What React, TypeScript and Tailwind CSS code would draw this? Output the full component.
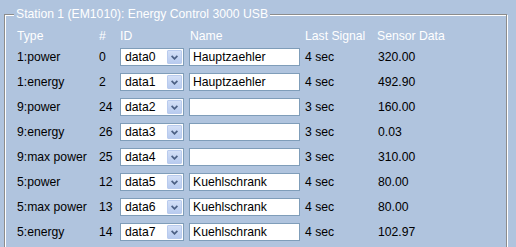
import React from 'react';

interface Row {
  type: string;
  num: number;
  id: string;
  name: string;
  signal: string;
  data: string;
}

const ROWS: Row[] = [
  { type: '1:power', num: 0, id: 'data0', name: 'Hauptzaehler', signal: '4 sec', data: '320.00' },
  { type: '1:energy', num: 2, id: 'data1', name: 'Hauptzaehler', signal: '4 sec', data: '492.90' },
  { type: '9:power', num: 24, id: 'data2', name: '', signal: '3 sec', data: '160.00' },
  { type: '9:energy', num: 26, id: 'data3', name: '', signal: '3 sec', data: '0.03' },
  { type: '9:max power', num: 25, id: 'data4', name: '', signal: '3 sec', data: '310.00' },
  { type: '5:power', num: 12, id: 'data5', name: 'Kuehlschrank', signal: '4 sec', data: '80.00' },
  { type: '5:max power', num: 13, id: 'data6', name: 'Kuehlschrank', signal: '4 sec', data: '80.00' },
  { type: '5:energy', num: 14, id: 'data7', name: 'Kuehlschrank', signal: '4 sec', data: '102.97' },
];

const Combo: React.FC<{ value: string }> = ({ value }) => (
  <div className="flex h-[18px] w-[64px] items-stretch border border-[#7f9db9] bg-white">
    <span className="flex-1 pl-[4px] leading-[16px] text-black">{value}</span>
    <span className="m-[1px] flex w-[15px] items-center justify-center rounded-[1px] border border-[#b9cbee] bg-gradient-to-b from-[#d4e0f7] to-[#b8cbef]">
      <svg width="7" height="5" viewBox="0 0 7 5">
        <path d="M0.6 0.9 L3.5 3.8 L6.4 0.9" fill="none" stroke="#4d6185" strokeWidth="1.8" />
      </svg>
    </span>
  </div>
);

export default function App() {
  return (
    <div
      className="relative h-[247px] w-[516px] overflow-hidden bg-[#b0c4de] text-[12.2px]"
      style={{ fontFamily: '"Liberation Sans", Arial, sans-serif' }}
    >
      <div className="absolute left-[4px] top-[14px] h-[260px] w-[503px] border border-[#8c8c8c] shadow-[inset_1px_1px_0_#ffffff,1px_1px_0_#ffffff]" />
      <span className="absolute left-[14px] top-[7px] bg-[#b0c4de] px-[2px] leading-[15px] text-white">
        Station 1 (EM1010): Energy Control 3000 USB
      </span>

      <div className="grid grid-cols-[82px_21px_69px_116px_72px_1fr] gap-y-[7px] pl-[17px] pt-[31px]">
        <span className="leading-[10px] text-white">Type</span>
        <span className="leading-[10px] text-white">#</span>
        <span className="leading-[10px] text-white">ID</span>
        <span className="pl-[1px] leading-[10px] text-white">Name</span>
        <span className="leading-[10px] text-white">Last Signal</span>
        <span className="leading-[10px] text-white">Sensor Data</span>

        {ROWS.map((r) => (
          <React.Fragment key={r.id}>
            <span className="leading-[18px] text-black">{r.type}</span>
            <span className="leading-[18px] text-black">{r.num}</span>
            <Combo value={r.id} />
            <div className="h-[18px] w-[111px] border border-[#7f9db9] bg-white pl-[3px] leading-[16px] text-black">
              {r.name}
            </div>
            <span className="leading-[18px] text-black">{r.signal}</span>
            <span className="pl-[1px] leading-[18px] text-black">{r.data}</span>
          </React.Fragment>
        ))}
      </div>
    </div>
  );
}
